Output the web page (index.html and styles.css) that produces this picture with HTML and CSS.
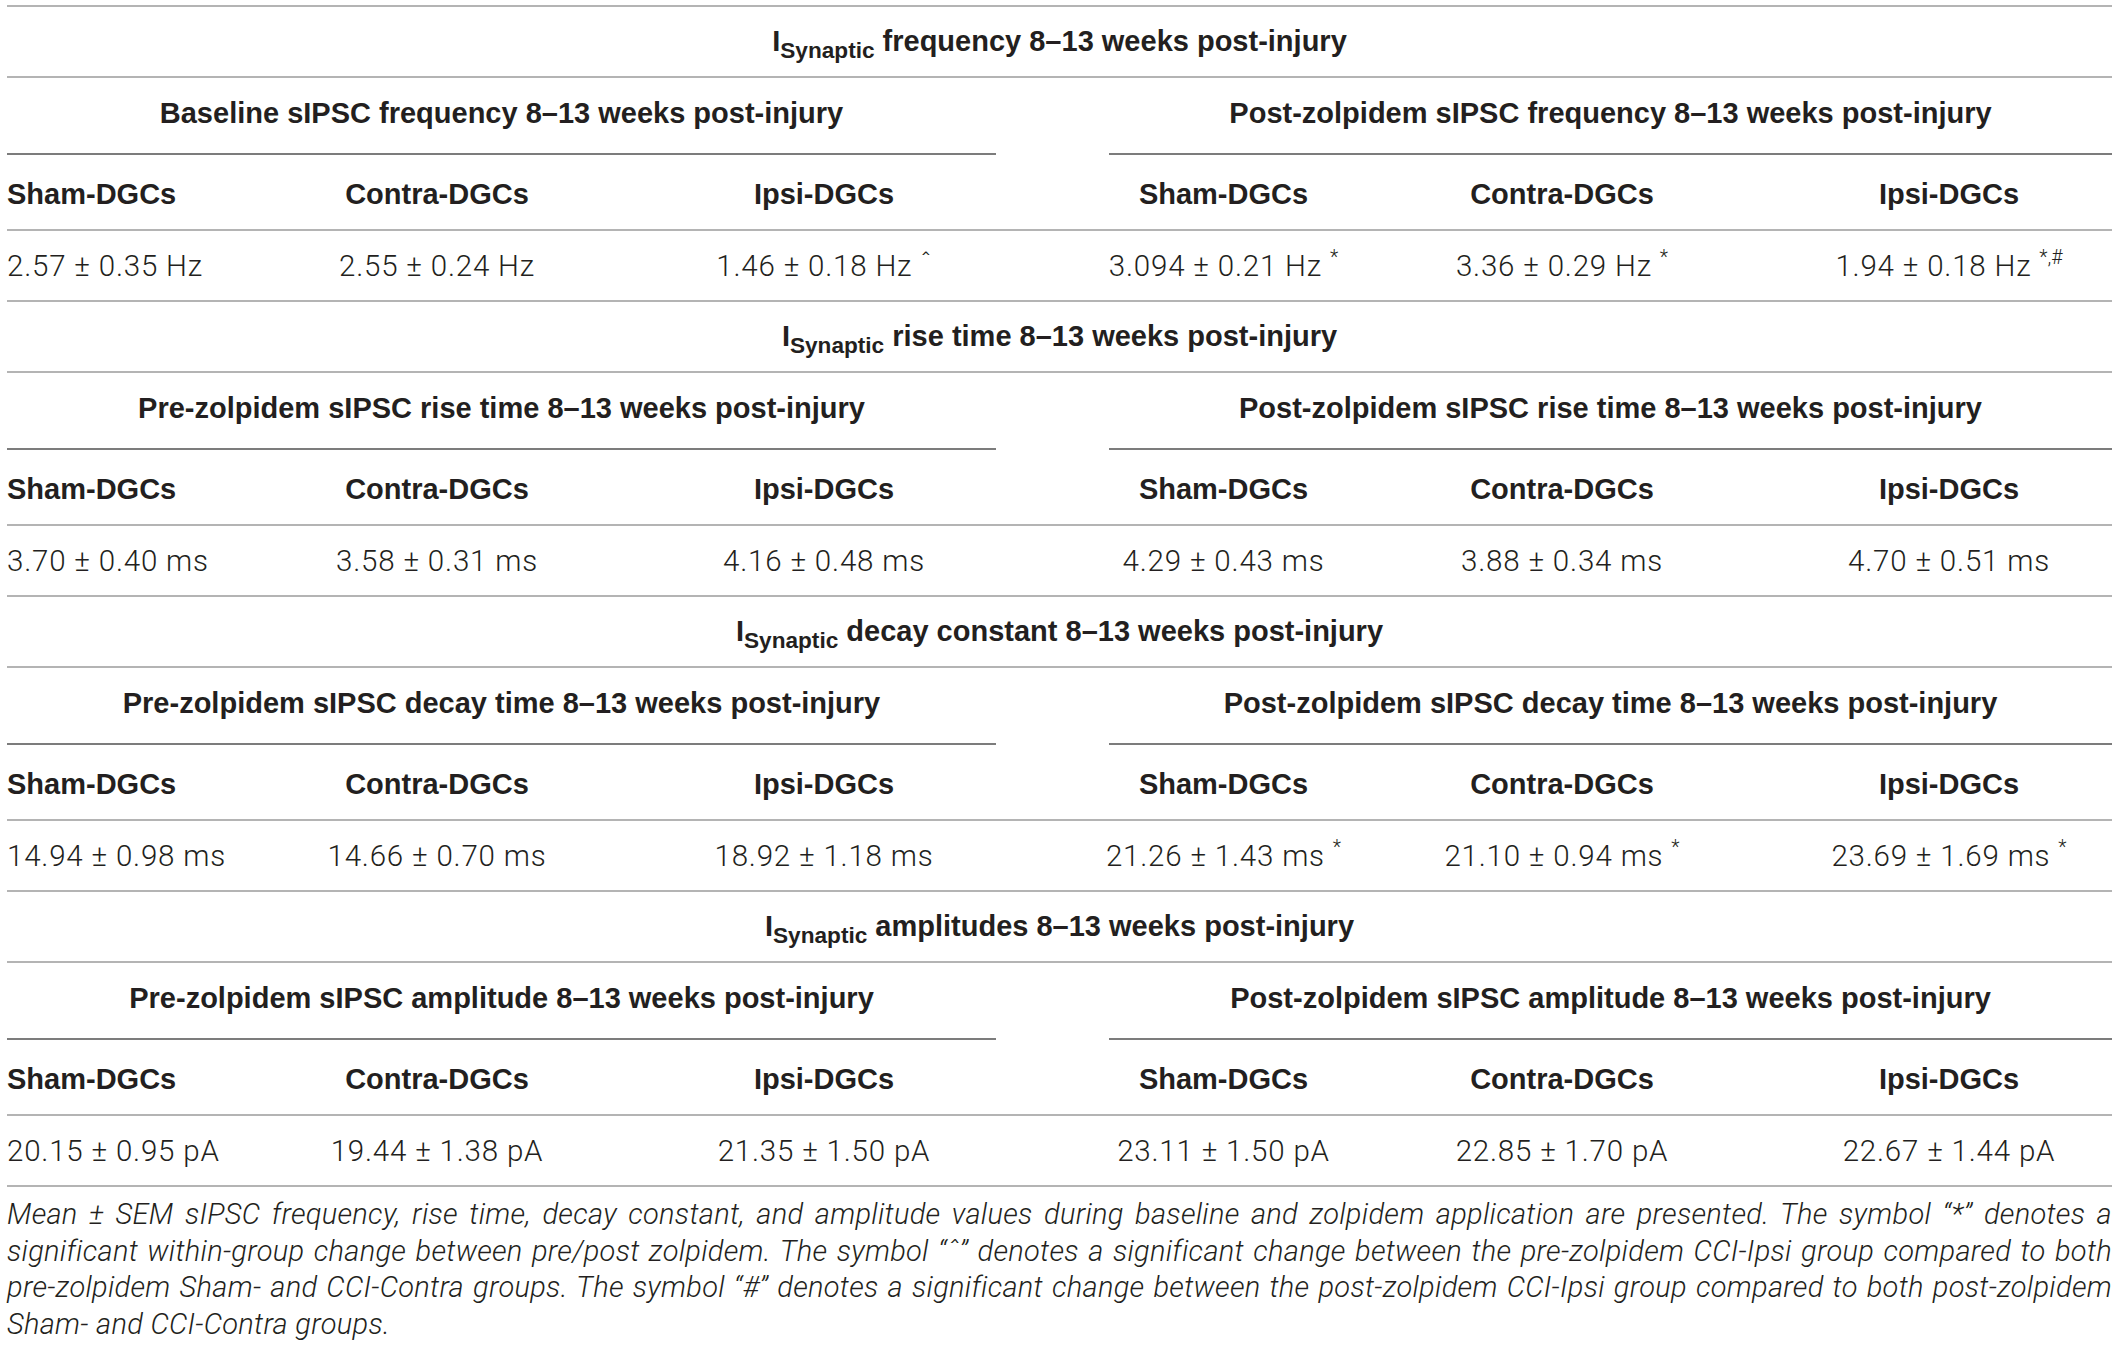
FILE: index.html
```html
<!DOCTYPE html>
<html lang="en">
<head>
<meta charset="utf-8">
<title>sIPSC table</title>
<link rel="stylesheet" href="styles.css">
</head>
<body>
<div class="page">
  <div class="tbl">
    <section class="block">
      <div class="cell title"><span>I<sub>Synaptic</sub> frequency 8–13 weeks post-injury</span></div>
      <div class="cell sub sub-l"><span>Baseline sIPSC frequency 8–13 weeks post-injury</span></div>
      <div class="cell sub-gap"></div>
      <div class="cell sub sub-r"><span>Post-zolpidem sIPSC frequency 8–13 weeks post-injury</span></div>
      <div class="cell head first"><span>Sham-DGCs</span></div>
      <div class="cell head"><span>Contra-DGCs</span></div>
      <div class="cell head"><span>Ipsi-DGCs</span></div>
      <div class="cell head gap"></div>
      <div class="cell head"><span>Sham-DGCs</span></div>
      <div class="cell head"><span>Contra-DGCs</span></div>
      <div class="cell head"><span>Ipsi-DGCs</span></div>
      <div class="cell val first"><span>2.57 ± 0.35 Hz</span></div>
      <div class="cell val"><span>2.55 ± 0.24 Hz</span></div>
      <div class="cell val"><span>1.46 ± 0.18 Hz <sup class="caret">ˆ</sup></span></div>
      <div class="cell val gap"></div>
      <div class="cell val"><span>3.094 ± 0.21 Hz <sup>*</sup></span></div>
      <div class="cell val"><span>3.36 ± 0.29 Hz <sup>*</sup></span></div>
      <div class="cell val"><span>1.94 ± 0.18 Hz <sup>*,#</sup></span></div>
    </section>
    <section class="block">
      <div class="cell title"><span>I<sub>Synaptic</sub> rise time 8–13 weeks post-injury</span></div>
      <div class="cell sub sub-l"><span>Pre-zolpidem sIPSC rise time 8–13 weeks post-injury</span></div>
      <div class="cell sub-gap"></div>
      <div class="cell sub sub-r"><span>Post-zolpidem sIPSC rise time 8–13 weeks post-injury</span></div>
      <div class="cell head first"><span>Sham-DGCs</span></div>
      <div class="cell head"><span>Contra-DGCs</span></div>
      <div class="cell head"><span>Ipsi-DGCs</span></div>
      <div class="cell head gap"></div>
      <div class="cell head"><span>Sham-DGCs</span></div>
      <div class="cell head"><span>Contra-DGCs</span></div>
      <div class="cell head"><span>Ipsi-DGCs</span></div>
      <div class="cell val first"><span>3.70 ± 0.40 ms</span></div>
      <div class="cell val"><span>3.58 ± 0.31 ms</span></div>
      <div class="cell val"><span>4.16 ± 0.48 ms</span></div>
      <div class="cell val gap"></div>
      <div class="cell val"><span>4.29 ± 0.43 ms</span></div>
      <div class="cell val"><span>3.88 ± 0.34 ms</span></div>
      <div class="cell val"><span>4.70 ± 0.51 ms</span></div>
    </section>
    <section class="block">
      <div class="cell title"><span>I<sub>Synaptic</sub> decay constant 8–13 weeks post-injury</span></div>
      <div class="cell sub sub-l"><span>Pre-zolpidem sIPSC decay time 8–13 weeks post-injury</span></div>
      <div class="cell sub-gap"></div>
      <div class="cell sub sub-r"><span>Post-zolpidem sIPSC decay time 8–13 weeks post-injury</span></div>
      <div class="cell head first"><span>Sham-DGCs</span></div>
      <div class="cell head"><span>Contra-DGCs</span></div>
      <div class="cell head"><span>Ipsi-DGCs</span></div>
      <div class="cell head gap"></div>
      <div class="cell head"><span>Sham-DGCs</span></div>
      <div class="cell head"><span>Contra-DGCs</span></div>
      <div class="cell head"><span>Ipsi-DGCs</span></div>
      <div class="cell val first"><span>14.94 ± 0.98 ms</span></div>
      <div class="cell val"><span>14.66 ± 0.70 ms</span></div>
      <div class="cell val"><span>18.92 ± 1.18 ms</span></div>
      <div class="cell val gap"></div>
      <div class="cell val"><span>21.26 ± 1.43 ms <sup>*</sup></span></div>
      <div class="cell val"><span>21.10 ± 0.94 ms <sup>*</sup></span></div>
      <div class="cell val"><span>23.69 ± 1.69 ms <sup>*</sup></span></div>
    </section>
    <section class="block">
      <div class="cell title"><span>I<sub>Synaptic</sub> amplitudes 8–13 weeks post-injury</span></div>
      <div class="cell sub sub-l"><span>Pre-zolpidem sIPSC amplitude 8–13 weeks post-injury</span></div>
      <div class="cell sub-gap"></div>
      <div class="cell sub sub-r"><span>Post-zolpidem sIPSC amplitude 8–13 weeks post-injury</span></div>
      <div class="cell head first"><span>Sham-DGCs</span></div>
      <div class="cell head"><span>Contra-DGCs</span></div>
      <div class="cell head"><span>Ipsi-DGCs</span></div>
      <div class="cell head gap"></div>
      <div class="cell head"><span>Sham-DGCs</span></div>
      <div class="cell head"><span>Contra-DGCs</span></div>
      <div class="cell head"><span>Ipsi-DGCs</span></div>
      <div class="cell val first"><span>20.15 ± 0.95 pA</span></div>
      <div class="cell val"><span>19.44 ± 1.38 pA</span></div>
      <div class="cell val"><span>21.35 ± 1.50 pA</span></div>
      <div class="cell val gap"></div>
      <div class="cell val"><span>23.11 ± 1.50 pA</span></div>
      <div class="cell val"><span>22.85 ± 1.70 pA</span></div>
      <div class="cell val"><span>22.67 ± 1.44 pA</span></div>
    </section>
  </div>
  <p class="caption">
    <span class="line">Mean ± SEM sIPSC frequency, rise time, decay constant, and amplitude values during baseline and zolpidem application are presented. The symbol “*” denotes a</span>
    <span class="line">significant within-group change between pre/post zolpidem. The symbol “ˆ” denotes a significant change between the pre-zolpidem CCI-Ipsi group compared to both</span>
    <span class="line">pre-zolpidem Sham- and CCI-Contra groups. The symbol “#” denotes a significant change between the post-zolpidem CCI-Ipsi group compared to both post-zolpidem</span>
    <span class="line last">Sham- and CCI-Contra groups.</span>
  </p>
</div>
</body>
</html>
```

FILE: styles.css
```css
html, body {
  margin: 0;
  padding: 0;
  background: #ffffff;
}

body {
  color: #231f20;
  font-family: "Liberation Sans", Arial, Helvetica, sans-serif;
}

.page {
  padding: 5px 7px 0 7px;
}

.tbl {
  border-top: 2px solid #b4b4b4;
}

.block {
  display: grid;
  grid-template-columns: 215px 430px 344px 113px 229px 448px 326px;
  grid-template-rows: 71px 77px 76px 71px;
}

.cell {
  box-sizing: border-box;
  display: flex;
  align-items: center;
  justify-content: center;
  border-bottom: 2px solid #b4b4b4;
  font-size: 29px;
  white-space: nowrap;
}

.title {
  grid-column: 1 / -1;
  font-weight: bold;
}

.title sub {
  font-size: 0.78em;
  vertical-align: -0.32em;
  line-height: 0;
}

.sub {
  font-weight: bold;
  border-bottom-color: #7c7c7c;
  padding-bottom: 4px;
}

.sub-l {
  grid-column: 1 / 4;
}

.sub-r {
  grid-column: 5 / 8;
}

.sub-gap {
  border-bottom: none;
}

.head {
  font-weight: bold;
  padding-top: 5px;
}

.first {
  justify-content: flex-start;
}

.val {
  font-family: Roboto, "Liberation Sans", Arial, sans-serif;
  font-weight: 300;
  font-size: 29.5px;
  letter-spacing: 0.8px;
  color: #231f20;
}

.val sup {
  font-size: 0.66em;
  line-height: 0;
  vertical-align: 0.6em;
  letter-spacing: 0;
}

.val sup.caret {
  font-size: 0.9em;
  vertical-align: 0.2em;
}

.caption {
  margin: 9px 0 0 0;
  font-family: Roboto, "Liberation Sans", Arial, sans-serif;
  font-weight: 300;
  font-style: italic;
  font-size: 29px;
  letter-spacing: 0.3px;
  line-height: 36.5px;
  color: #231f20;
}

.line {
  display: block;
  white-space: nowrap;
  text-align: justify;
  text-align-last: justify;
}

.line.last {
  text-align-last: left;
}
```
